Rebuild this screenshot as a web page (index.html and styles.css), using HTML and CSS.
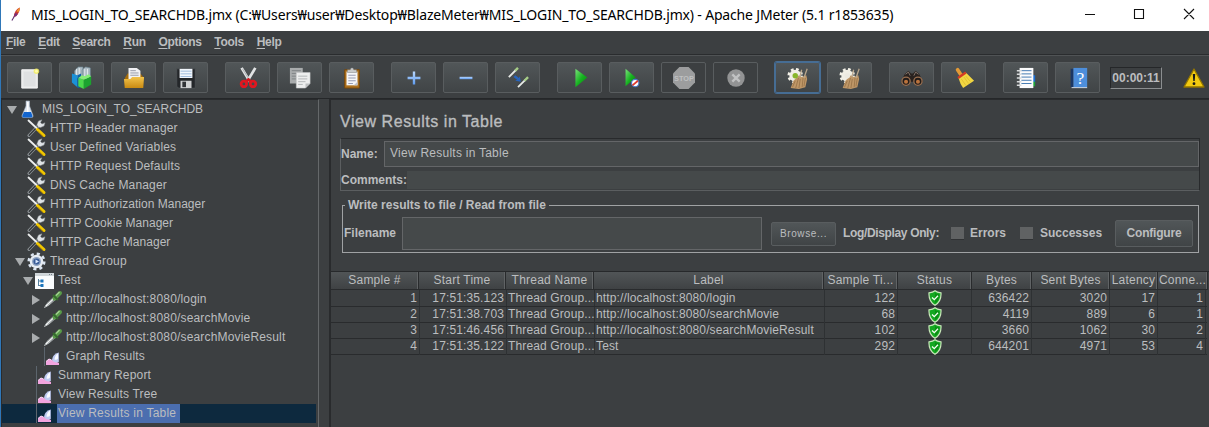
FILE: index.html
```html
<!DOCTYPE html>
<html lang="en">
<head>
<meta charset="utf-8">
<title>Apache JMeter</title>
<link rel="stylesheet" href="styles.css">
</head>
<body>
<svg class="defs" aria-hidden="true">
  <defs>
    <linearGradient id="gBlue" x1="0" y1="0" x2="0" y2="1"><stop offset="0" stop-color="#b9d8ff"/><stop offset="1" stop-color="#5f9cf0"/></linearGradient>
    <linearGradient id="gGreen" x1="0" y1="0" x2="1" y2="1"><stop offset="0" stop-color="#7be37b"/><stop offset=".5" stop-color="#17b321"/><stop offset="1" stop-color="#067a0c"/></linearGradient>
    <linearGradient id="gGold" x1="0" y1="0" x2="0" y2="1"><stop offset="0" stop-color="#f2c24a"/><stop offset="1" stop-color="#c98a12"/></linearGradient>
    <symbol id="tools" viewBox="0 0 20 19">
      <path d="M2 16.500 11.500 6.500" stroke="#8f9498" stroke-width="3" stroke-linecap="round"/>
      <path d="M2.300 16.200 11.500 6.500" stroke="#34383b" stroke-width="1.400" stroke-linecap="round"/>
      <path d="M10 5.500 11.500 2 15 .8 13.500 3.500 15 5 18 3.800 17 7 13.500 8.500 11 8z" fill="#dfe3e6" stroke="#8b9094" stroke-width=".5"/>
      <path d="M1.500 1.500 10 9.500" stroke="#eceeee" stroke-width="1.800" stroke-linecap="round"/>
      <path d="M10.500 10.500 17 16.500" stroke="#f2c800" stroke-width="3" stroke-linecap="round"/>
      <path d="M11 12.500 16 17.300" stroke="#b58500" stroke-width=".8"/>
    </symbol>
    <symbol id="flask" viewBox="0 0 20 19">
      <path d="M7 1h3.500v5l3.500 9.500q.5 2-1.500 2h-8q-2 0-1.500-2L7 6z" fill="#dfe6ef" stroke="#a8b5c5" stroke-width=".6"/>
      <path d="M5 12h7l1.500 4q0 1.500-1.500 1.500H5Q3 17.500 3.200 16z" fill="#1265cf"/><path d="M8.700 2v10" stroke="#fff" stroke-width="1.500"/>
    </symbol>
    <symbol id="gear" viewBox="0 0 20 19">
      <circle cx="9.500" cy="9.500" r="7.800" fill="none" stroke="#dce6f2" stroke-width="2.500" stroke-dasharray="3.100 3.026"/>
      <circle cx="9.500" cy="9.500" r="6.800" fill="#e8edf4"/><circle cx="9.500" cy="9.500" r="4.500" fill="#8ea3c2"/>
      <circle cx="9.500" cy="9.500" r="3" fill="#365a96"/><path d="M8.500 7.500 12 9.500 8.500 11.500z" fill="#dce9ff"/>
    </symbol>
    <symbol id="ctrl" viewBox="0 0 20 19">
      <path d="M0 2h19v16H0z" fill="#fafcfd"/><path d="M0 2h19v3H0z" fill="#cfd5d8"/><path d="M14 3h1v1h-1zM16 3h1v1h-1z" fill="#768289"/>
      <path d="M3.500 8v7M4 10h4M4 14.500h4" stroke="#58819f"/><path d="M5.500 8.500h3v3h-3zM5.500 13h3v3h-3z" fill="#1b75bc"/>
    </symbol>
    <symbol id="pipette" viewBox="0 0 20 19">
      <path d="M1.500 17.500 4 13.500 12 6l2 2L6 15z" fill="#555c5e" stroke="#cfd4d6" stroke-width=".8"/>
      <path d="M3 16 12 7.500" stroke="#f6f8f8" stroke-width="1.200"/><path d="M11.500 8.500 17 3" stroke="#599b49" stroke-width="4" stroke-linecap="round"/>
      <path d="M10 5 15 10" stroke="#356b2e" stroke-width="1.800"/><path d="M13 5.500 16.500 2" stroke="#a8d497" stroke-width="1.200"/>
    </symbol>
    <symbol id="graph" viewBox="0 0 20 19">
      <path d="M1.500 0v19" stroke="#5c656d"/><path d="M3 18v-3.500L6 12l3 1 3 1 4 2v2z" fill="#f2a4df"/>
      <path d="M3 14.500 6 12l2.500 1" fill="none" stroke="#ffdaf8"/><path d="M9 13Q9.500 7 15.800 5.500V15Q11 16.500 9 13z" fill="#bfcaf0"/><path d="M11.500 12.500Q12 8 15 6.500v5q-1.500 2-3.500 1z" fill="#f8faff"/>
    </symbol>
    <symbol id="shield" viewBox="0 0 14 16">
      <path d="M7 .8Q9 2.500 13 2.800 13.500 11.500 7 15.300.500 11.500 1 2.800 5 2.500 7 .8z" fill="#14a821" stroke="#c9e8ba" stroke-width="1.200"/>
      <path d="M7 3Q9 4.200 11 4.500 11.300 10.500 7 13z" fill="#0a8f14"/><path d="M4 7.500 6.300 9.700 10 5.800" fill="none" stroke="#f4fff2" stroke-width="1.300"/>
    </symbol>
    <symbol id="gearbroom" viewBox="0 0 24 24">
      <circle cx="9" cy="9.500" r="7" fill="none" stroke="#f4f2e9" stroke-width="3" stroke-dasharray="2.900 2.597"/><circle cx="9" cy="9.500" r="6.500" fill="#f0eee5"/>
      <path d="M4 23 7 15 13 9 16 11 21 9 22 13 20 22 13 24z" fill="#bf9767"/><path d="M9 15l-3 7M12.500 12l-3 11M14.500 13l-1.500 10M17.500 12l-1 10M20 12l-1.500 9" stroke="#8b683f" stroke-width=".7"/>
      <path d="M14 11 16 3M18.500 12 22 2" stroke="#b9a68c" stroke-width="1.400"/>
      <circle class="hub" cx="9" cy="9.500" r="3"/>
    </symbol>
  </defs>
</svg>
<div class="window">
  <header class="titlebar">
    <svg class="feather" viewBox="0 0 12 16"><path d="M1 15 4 10" stroke="#5c2a6b" stroke-width="1.200"/><path d="M3 11Q3.500 4 9.500 1q.5 5-4 9.500z" fill="#c83a35"/><path d="M6 5Q8 2 9.500 1q.3 3-1.500 5z" fill="#f39a2a"/><path d="M3 11 4.500 7l3 1-2 2.500z" fill="#76307b"/></svg>
    <span class="caption">MIS_LOGIN_TO_SEARCHDB.jmx (C:₩Users₩user₩Desktop₩BlazeMeter₩MIS_LOGIN_TO_SEARCHDB.jmx) - Apache JMeter (5.1 r1853635)</span>
    <svg class="winbtns" viewBox="0 0 110 12"><path d="M0 6.500h10M49.500 1.500h9v9h-9zM99 1l10 10M109 1 99 11" fill="none" stroke="#111" stroke-width="1.100"/></svg>
  </header>
  <nav class="menubar">
    <span><u>F</u>ile</span><span><u>E</u>dit</span><span><u>S</u>earch</span><span><u>R</u>un</span><span><u>O</u>ptions</span><span><u>T</u>ools</span><span><u>H</u>elp</span>
  </nav>
  <div class="toolbar">
    <div class="group">
      <button><svg viewBox="0 0 24 24"><path d="M3 3h17v20H3z" fill="#e9eaea" stroke="#fafafa"/><path d="M5 5h13v16H5z" fill="#dfe1e2"/><circle cx="19" cy="4.500" r="3" fill="#f4ee63" opacity=".85"/><circle cx="19" cy="4.500" r="1.500" fill="#fffcae"/></svg></button>
      <button><svg viewBox="0 0 24 24"><path d="M4 4 8 0h5v12H4zM12 3l4-3 5 1v12h-9z" fill="#aebcc4" stroke="#6f8a98" stroke-width=".7"/><path d="M6 2v8M9 1v8M15 2v8M18 2v8" stroke="#e3eaee"/><path d="M1 7 7 9v13L1 17z" fill="#1b91d8"/><path d="M7 9l4-2v15l-4 1z" fill="#0d65a8"/><path d="M8 12 14 14v10l-6-3z" fill="#4bd94b"/><path d="m14 14 8-4v9l-8 5z" fill="#1ca32f"/><path d="m8 12 4-3 3 1 4-2 3 2-8 4z" fill="#86ef76"/></svg></button>
      <button><svg viewBox="0 0 24 24"><path d="M2 12 5 7h14l3 4v12H2z" fill="#a56d0b"/><path d="M6 1h9l4 3v11H6z" fill="#f1f1f4"/><path d="M8 4h6M8 6.500h9M8 9h9" stroke="#9296a5"/><path d="M1 13h7l2-2h13l-1 12H2z" fill="url(#gGold)"/></svg></button>
      <button><svg viewBox="0 0 24 24"><path d="M2 2h20v21H4l-2-2z" fill="#24272a" stroke="#55595b" stroke-width=".6"/><path d="M5 2h14v10H5z" fill="#f2f7fc"/><path d="M6 4h12v1H6zM6 7h12v1H6zM6 10h12v1H6z" fill="#86abd4"/><path d="M6 15h12v8H6z" fill="#cfd1d2"/><path d="M8 16h4v6H8z" fill="#303336"/></svg></button>
    </div>
    <div class="group">
      <button><svg viewBox="0 0 24 24"><path d="M5 1 14 16M20 1 11 16" stroke="#e1e3e4" stroke-width="3"/><path d="M6 2 14 15" stroke="#9b9fa2" stroke-width=".8"/><path d="m12 13 3 3M13 13l-3 3" stroke="#d2161d" stroke-width="3"/><circle cx="7.500" cy="18.500" r="3" fill="none" stroke="#e11720" stroke-width="3"/><circle cx="17.500" cy="18.500" r="3" fill="none" stroke="#e11720" stroke-width="3"/></svg></button>
      <button><svg viewBox="0 0 24 24"><path d="M1 1h14v17H1z" fill="#a9acad"/><path d="M3 4h10M3 7h10M3 10h5M3 13h5" stroke="#7d8183"/><path d="M8 6h15v12l-5 5H8z" fill="#edeeee" stroke="#c3c5c6" stroke-width=".6"/><path d="M10 10h10M10 13h10M10 16h8M10 19h5" stroke="#aeb2b4"/><path d="M18 23v-5h5z" fill="#bbbebf"/></svg></button>
      <button><svg viewBox="0 0 24 24"><path d="M4 3h16v20H4z" fill="#ae711d" stroke="#75460b"/><path d="M6 5h12v15H6z" fill="#f4f5f8"/><path d="M8 9h8M8 12h8M8 15h8M8 18h5" stroke="#8e94ad"/><path d="M7 3h3l1-2h2l1 2h3v3H7z" fill="#c9cbcc" stroke="#74777a" stroke-width=".5"/><path d="m14 20 4-4v4z" fill="#bdc2cc"/></svg></button>
    </div>
    <div class="group">
      <button><svg viewBox="0 0 24 24"><path d="M10.700 5h2.600v5.700H19v2.600h-5.700V19h-2.600v-5.700H5v-2.600h5.700z" fill="url(#gBlue)"/></svg></button>
      <button><svg viewBox="0 0 24 24"><path d="M5 10.700h14v2.600H5z" fill="url(#gBlue)"/></svg></button>
      <button><svg viewBox="0 0 24 24"><path d="M2 11 10 3M12 22l8-8" stroke="#e6e9e6" stroke-width="2"/><path d="m9 4 3-3M19 15l4-4" stroke="#a7ce88" stroke-width="2.600"/><path d="m9 9 4 3 1-2 1 6-6-1 2-1-4-3z" fill="#2764bd"/></svg></button>
    </div>
    <div class="group">
      <button><svg viewBox="0 0 24 24"><path d="M7 2 20 11.500 7 22z" fill="url(#gGreen)"/></svg></button>
      <button><svg viewBox="0 0 24 24"><path d="M5 2 16 11.500 5 21z" fill="url(#gGreen)"/><circle cx="15.500" cy="17.500" r="4" fill="#fff" stroke="#4b7bc9" stroke-width="1.200"/><path d="m12.500 20 6-5" stroke="#e03b2d" stroke-width="2"/></svg></button>
      <button class="off"><svg viewBox="0 0 24 24"><path d="M7 0h10l7 7v10l-7 7H7l-7-7V7z" fill="#9c9d9e"/><text class="stop" x="12" y="15" text-anchor="middle">STOP</text></svg></button>
      <button class="off"><svg viewBox="0 0 24 24"><circle cx="12" cy="12" r="9.500" fill="#929394"/><path d="m8 8 8 8M16 8l-8 8" stroke="#c1c2c3" stroke-width="2.500"/></svg></button>
    </div>
    <div class="group">
      <button class="active"><svg class="lit"><use href="#gearbroom"/></svg></button>
      <button><svg class="dim"><use href="#gearbroom"/></svg></button>
    </div>
    <div class="group">
      <button><svg viewBox="0 0 24 24"><path d="M4 8 8 4l3 3h2l3-3 4 4 4 8H0z" fill="#29221f"/><path d="M5 8 8 5.500l2 4M19 8l-3-2.500-2 4" stroke="#8b7b70" fill="none"/><circle cx="5.500" cy="15.500" r="4.500" fill="#211c1a" stroke="#9b7050" stroke-width="1.400"/><circle cx="18.500" cy="15.500" r="4.500" fill="#211c1a" stroke="#9b7050" stroke-width="1.400"/><circle cx="5.500" cy="16" r="2.200" fill="#bb733d"/><circle cx="18.500" cy="16" r="2.200" fill="#bb733d"/></svg></button>
      <button><svg viewBox="0 0 24 24"><path d="M5 3 9 9" stroke="#e29a36" stroke-width="4" stroke-linecap="round"/><path d="M6 12 14 6l9 9-12 8q-3-4-5-11z" fill="#f1d642"/><path d="m9 13 5 7M12 11l5 7M14 10l5 6" stroke="#dcb82a" stroke-width=".8"/><path d="M5.500 12 14 6" stroke="#d43b24" stroke-width="2.500"/></svg></button>
    </div>
    <div class="group">
      <button><svg viewBox="0 0 24 24"><path d="M18 9h4v9h-4z" fill="#1c6fd5"/><path d="M18 16h4v5h-4z" fill="#20a339"/><path d="M5 1h15v22H5z" fill="#fbfbfc"/><path d="M7 4h11M7 7.500h11M7 11h11M7 14.500h11M7 18h11" stroke="#3872ad"/><path d="M2 4h5M2 8h5M2 12h5M2 16h5M2 20h5" stroke="#d8dadb" stroke-width="1.700"/></svg></button>
      <button><svg viewBox="0 0 24 24"><path d="M4 2h3v20H4z" fill="#1b3764"/><path d="M7 1h15v21H7z" fill="#4d8edb"/><path d="M5 22.500h17" stroke="#dce8f7"/><text class="help" x="14.500" y="18" text-anchor="middle">?</text></svg></button>
    </div>
    <div class="timer">00:00:11</div>
    <svg class="warn" viewBox="0 0 22 20"><path d="M11 1 21 19H1z" fill="#f2ca10" stroke="#927500" stroke-width="1.300" stroke-linejoin="round"/><path d="M9.800 6h2.400l-.5 7h-1.400z" fill="#17191a"/><circle cx="11" cy="15.700" r="1.400" fill="#17191a"/></svg>
  </div>
  <main class="split">
    <aside class="tree">
      <div class="node l0"><i class="open"></i><svg><use href="#flask"/></svg><span class="tight">MIS_LOGIN_TO_SEARCHDB</span></div>
      <div class="node l1"><i></i><svg><use href="#tools"/></svg><span>HTTP Header manager</span></div>
      <div class="node l1"><i></i><svg><use href="#tools"/></svg><span>User Defined Variables</span></div>
      <div class="node l1"><i></i><svg><use href="#tools"/></svg><span>HTTP Request Defaults</span></div>
      <div class="node l1"><i></i><svg><use href="#tools"/></svg><span>DNS Cache Manager</span></div>
      <div class="node l1"><i></i><svg><use href="#tools"/></svg><span class="snug">HTTP Authorization Manager</span></div>
      <div class="node l1"><i></i><svg><use href="#tools"/></svg><span class="snug">HTTP Cookie Manager</span></div>
      <div class="node l1"><i></i><svg><use href="#tools"/></svg><span class="snug">HTTP Cache Manager</span></div>
      <div class="node l1"><i class="open"></i><svg><use href="#gear"/></svg><span>Thread Group</span></div>
      <div class="node l2"><i class="open"></i><svg><use href="#ctrl"/></svg><span>Test</span></div>
      <div class="node l3"><i class="closed"></i><svg><use href="#pipette"/></svg><span>http://localhost:8080/login</span></div>
      <div class="node l3"><i class="closed"></i><svg><use href="#pipette"/></svg><span>http://localhost:8080/searchMovie</span></div>
      <div class="node l3"><i class="closed"></i><svg><use href="#pipette"/></svg><span>http://localhost:8080/searchMovieResult</span></div>
      <div class="node l3"><i></i><svg><use href="#graph"/></svg><span>Graph Results</span></div>
      <div class="node l2"><i></i><svg><use href="#graph"/></svg><span>Summary Report</span></div>
      <div class="node l2"><i></i><svg><use href="#graph"/></svg><span>View Results Tree</span></div>
      <div class="node l2 selected"><i></i><svg><use href="#graph"/></svg><span>View Results in Table</span></div>
    </aside>
    <section class="panel">
      <h1>View Results in Table</h1>
      <div class="naming">
        <div class="name"><b>Name:</b><div class="field">View Results in Table</div></div>
        <div class="comments"><b>Comments:</b><div class="flat"></div></div>
      </div>
      <fieldset>
        <legend>Write results to file / Read from file</legend>
        <b class="fl">Filename</b><div class="field file"></div><button class="browse">Browse...</button>
        <b class="only">Log/Display Only:</b><i class="check"></i><b class="err">Errors</b><i class="check"></i><b class="suc">Successes</b><button class="config">Configure</button>
      </fieldset>
      <div class="table">
        <div class="tr head"><span>Sample #</span><span>Start Time</span><span>Thread Name</span><span>Label</span><span>Sample Ti...</span><span>Status</span><span>Bytes</span><span>Sent Bytes</span><span>Latency</span><span>Conne...</span></div>
        <div class="tr"><span>1</span><span>17:51:35.123</span><span class="s">Thread Group...</span><span class="s">http://localhost:8080/login</span><span>122</span><span class="c"><svg><use href="#shield"/></svg></span><span>636422</span><span>3020</span><span>17</span><span>1</span></div>
        <div class="tr"><span>2</span><span>17:51:38.703</span><span class="s">Thread Group...</span><span class="s">http://localhost:8080/searchMovie</span><span>68</span><span class="c"><svg><use href="#shield"/></svg></span><span>4119</span><span>889</span><span>6</span><span>1</span></div>
        <div class="tr"><span>3</span><span>17:51:46.456</span><span class="s">Thread Group...</span><span class="s">http://localhost:8080/searchMovieResult</span><span>102</span><span class="c"><svg><use href="#shield"/></svg></span><span>3660</span><span>1062</span><span>30</span><span>2</span></div>
        <div class="tr"><span>4</span><span>17:51:35.122</span><span class="s">Thread Group...</span><span class="s">Test</span><span>292</span><span class="c"><svg><use href="#shield"/></svg></span><span>644201</span><span>4971</span><span>53</span><span>4</span></div>
      </div>
    </section>
  </main>
</div>
</body>
</html>
```

FILE: styles.css
```css
* { box-sizing: border-box; }
body { margin: 0; background: #3c3f41; color: #bbbdbf; font: 12px/16px "Liberation Sans", Arial, sans-serif; overflow: hidden; }
.defs { position: absolute; width: 0; height: 0; }
i { font-style: normal; }
.window { height: 427px; display: flex; flex-direction: column; border-left: 1px solid #2f77b8; }
.titlebar { height: 31px; flex: none; background: #fff; color: #000; display: flex; align-items: center; padding-left: 10px; }
.feather { width: 11px; height: 16px; margin: -4px 9px 0 0; }
.caption { width: 1054px; white-space: nowrap; font: 14px/20px "Noto Sans", "Open Sans", sans-serif; letter-spacing: -0.165px; margin-top: -1px; }
.winbtns { width: 110px; height: 12px; flex: none; margin-top: -3px; }
.menubar { height: 24px; flex: none; display: flex; gap: 12.7px; padding: 3px 0 0 5px; font-weight: bold; letter-spacing: -.3px; border-bottom: 1px solid #2a2c2e; }
.menubar u { text-underline-offset: 2px; }
.toolbar { height: 43px; flex: none; display: flex; align-items: flex-start; padding: 6px 0 0 6px; border-top: 1px solid #505355; }
.group { display: flex; gap: 7px; margin-right: 17px; }
button { margin: 0; padding: 0; font: bold 12px/16px "Liberation Sans", sans-serif; color: #bbbdbf; border: 1px solid #595d5f; border-radius: 2px; background: linear-gradient(#515658, #404446); display: flex; align-items: center; justify-content: center; }
.toolbar button { width: 45px; height: 31px; }
.toolbar button svg { width: 22px; height: 22px; overflow: visible; }
.toolbar .off { background: #3c3f41; }
.toolbar .active { border-color: #466d94; box-shadow: 0 0 0 1px #466d94; }
.stop { font: bold 8px "Liberation Sans", sans-serif; fill: #bfc0c1; }
.help { font: 19px "Liberation Serif", serif; fill: #fff; }
.lit { fill: #88b62b; }
.dim { fill: #eceae2; }
.timer { width: 52px; height: 22px; margin: 5px 21px 0 -10px; border: 1px solid #252729; border-right-color: #8b8e90; border-bottom-color: #8b8e90; font-weight: bold; line-height: 20px; text-align: center; white-space: nowrap; }
.group:nth-last-child(3) { margin-right: 20px; }
.warn { width: 22px; height: 20px; margin-top: 6px; flex: none; }
.split { flex: 1; min-height: 0; display: flex; border-top: 1px solid #252729; }
.tree { width: 318px; flex: none; border-left: 1px solid #292b2d; border-right: 1px solid #65686a; border-top: 1px solid #292b2d; overflow: hidden; letter-spacing: .17px; }
.node { height: 19px; display: flex; align-items: center; margin-right: 2px; }
.node i { width: 12px; flex: none; }
.node svg { width: 20px; height: 19px; flex: none; margin-right: 3px; }
.node span { line-height: 18px; white-space: nowrap; margin-top: -2px; }
.node .tight { letter-spacing: -.04px; }
.node .snug { letter-spacing: .03px; }
.l0 { padding-left: 5px; }
.l1 { padding-left: 13px; }
.l2 { padding-left: 21px; }
.l3 { padding-left: 29px; }
.open::before { content: ""; display: block; width: 0; border: 5px solid transparent; border-top: 8px solid #a9acae; border-bottom: 0; }
.closed::before { content: ""; display: block; width: 0; border: 5px solid transparent; border-left: 8px solid #a9acae; border-right: 0; margin-left: 1px; }
.selected { background: #0d293e; }
.selected span { background: #4b6eaf; line-height: 19px; padding: 0 4px 0 1px; margin: 0 0 0 -1px; letter-spacing: .22px; }
.panel { flex: 1; min-width: 0; margin-left: 10px; border-left: 2px solid #292b2d; border-top: 1px solid #292b2d; }
h1 { margin: 11px 0 0 9px; font: 16px/22px "Liberation Sans", sans-serif; letter-spacing: .55px; -webkit-text-stroke: .35px #bbbdbf; }
.naming { margin: 5px 9px 0; height: 53px; width: 860px; border: 1px solid #282a2c; border-bottom-color: #5b5e60; border-left-color: #5b5e60; padding: 2px 0 0; }
.name, .comments { display: flex; align-items: center; }
.name b { width: 43px; }
.field { flex: 1; height: 26px; border: 1px solid #646668; background: #45494a; padding: 3px 5px; letter-spacing: .25px; }
.comments { margin-top: 4px; }
.comments b { width: 66px; }
.flat { flex: 1; height: 18px; background: #45494a; }
fieldset { position: relative; margin: 14px 0 0 11px; width: 857px; height: 48px; padding: 0 0 0 1px; border: 1px solid #a0a2a4; display: flex; align-items: center; }
legend { position: absolute; left: 2px; top: -9px; padding: 0 3px; background: #3c3f41; font-weight: bold; white-space: nowrap; }
fieldset b { white-space: nowrap; flex: none; margin-top: 7px; }
.fl { width: 58px; }
.file { flex: none; width: 360px; height: 33px; margin-top: 8px; }
.browse { width: 65px; height: 24px; margin: 9px 7px 0 9px; font: 10px/14px "Liberation Sans", sans-serif; letter-spacing: .6px; }
.only { width: 108px; letter-spacing: -.35px; }
.check { width: 13px; height: 13px; flex: none; background: #606263; border-bottom: 1px solid #303234; margin-top: 8px; }
.err { width: 56px; padding-left: 6px; }
.suc { width: 82px; padding-left: 7px; }
.config { width: 78px; height: 27px; margin-top: 8px; letter-spacing: -.2px; }
.table { margin-top: 18px; border-top: 1px solid #27292b; }
.tr { display: grid; grid-template-columns: 89px 87px 88px 230px 73px 74px 60px 78px 48px 48px; height: 16px; width: 876px; letter-spacing: .13px; border-bottom: 1px solid #292b2d; }
.tr span { text-align: right; white-space: nowrap; border-right: 1px solid #2e3133; padding-right: 2px; line-height: 15px; }
.tr .s { text-align: left; padding: 0 0 0 1px; }
.tr .c { text-align: center; padding-left: 2px; }
.tr svg { width: 14px; height: 16px; display: block; margin: 0 auto; }
.head { grid-template-columns: 88px 87px 88px 230px 74px 74px 60px 78px 48px 50px; width: 877px; height: 18px; letter-spacing: .22px; background: linear-gradient(#515557, #3f4244); }
.tr.head span { text-align: center; line-height: 17px; border-right: 1px solid #292b2d; box-shadow: inset -1px 0 #606365; padding: 0; }
.tr:nth-child(2) { height: 17px; }
.tr:nth-child(2) span { line-height: 16px; }
```
